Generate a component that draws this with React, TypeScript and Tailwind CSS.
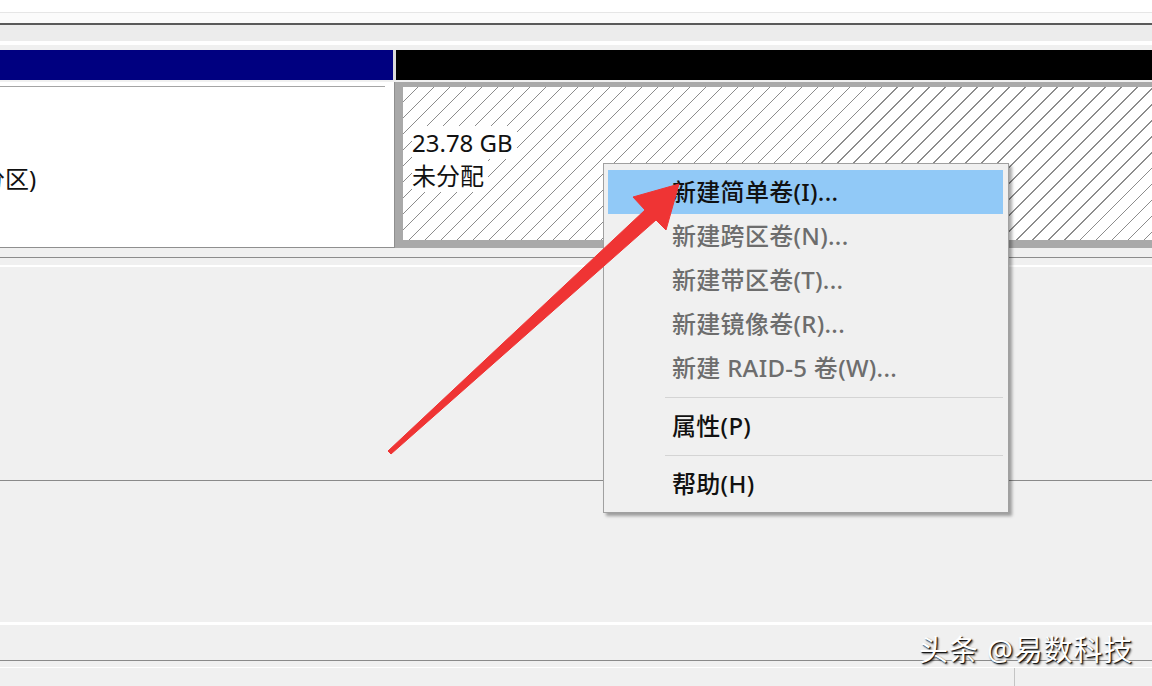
import React from "react";

type MenuItem = { label: string; disabled?: boolean; active?: boolean } | { separator: true };

const items: MenuItem[] = [
  { label: "新建简单卷(I)...", active: true },
  { label: "新建跨区卷(N)...", disabled: true },
  { label: "新建带区卷(T)...", disabled: true },
  { label: "新建镜像卷(R)...", disabled: true },
  { label: "新建 RAID-5 卷(W)...", disabled: true },
  { separator: true },
  { label: "属性(P)" },
  { separator: true },
  { label: "帮助(H)" },
];

function ContextMenu() {
  return (
    <div className="absolute left-[603px] top-[163px] w-[406px] border border-[#a0a0a0] bg-[#f0f0f0] py-[6px] shadow-[3px_3px_3px_rgba(0,0,0,0.35)]">
      {items.map((item, i) =>
        "separator" in item ? (
          <div key={i} className="flex h-[14px] items-center ml-[61px] mr-[5px]">
            <div className="h-px w-full bg-[#d4d4d4]" />
          </div>
        ) : (
          <div
            key={i}
            className={
              "ml-[4px] mr-[5px] flex h-[44px] items-center pl-[64px] text-[24px] font-medium tracking-[0.3px] " +
              (item.active ? "bg-[#91c9f7] text-[#111]" : item.disabled ? "text-[#6d6d6d]" : "text-[#111]")
            }
          >
            {item.label}
          </div>
        )
      )}
    </div>
  );
}

function Arrow() {
  return (
    <svg className="pointer-events-none absolute left-0 top-0" width="1152" height="686" viewBox="0 0 1152 686">
      <polygon
        points="679,184 633,197 645,210 388,451 391,454 656,220 666,230"
        fill="#ef3434"
        stroke="#ef3434"
        strokeWidth="1"
        strokeLinejoin="round"
      />
    </svg>
  );
}

export default function App() {
  return (
    <div className="relative h-[686px] w-[1152px] overflow-hidden bg-[#f0f0f0] font-['Noto_Sans','Noto_Sans_CJK_SC',sans-serif] text-[#111]">
      {/* top toolbar edges */}
      <div className="h-[12px] bg-white" />
      <div className="h-px bg-[#e6e6e6]" />
      <div className="h-[10px] bg-[#fbfbfb]" />
      <div className="h-[2px] bg-[#5a5a5a]" />
      <div className="h-[16px] bg-[#ececec]" />
      <div className="h-[4px] bg-white" />
      <div className="h-[5px] bg-[#f0f0f0]" />

      {/* volume header bars */}
      <div className="flex h-[30px]">
        <div className="w-[393px] bg-[#000080]" />
        <div className="w-[3px] bg-[#dadada]" />
        <div className="flex-1 bg-black" />
      </div>

      {/* volume boxes */}
      <div className="flex h-[168px] pt-[2px]">
        <div className="flex w-[395px] flex-col border-b border-r border-[#8f8f8f] bg-white">
          <div className="mt-[4px] h-px w-[385px] bg-[#a5a5a5]" />
          <div className="-ml-[19px] mt-[75px] whitespace-nowrap text-[24px] leading-[33px]">分区)</div>
        </div>
        <div className="flex flex-1 bg-[#a9a9a9] pb-[8px] pl-[8px] pt-[5px]">
          <div className="flex flex-1 flex-col items-start bg-[repeating-linear-gradient(135deg,#fff_0px,#fff_10.3px,#8c8c8c_10.3px,#8c8c8c_11.3px)] pl-[9px] pt-[39px] text-[24px] leading-[33px]">
            <span className="bg-white pr-[4px]">23.78 GB</span>
            <span className="bg-white pr-[4px]">未分配</span>
          </div>
        </div>
      </div>

      {/* lower pane */}
      <div className="h-[9px]" />
      <div className="h-px bg-[#8c8c8c]" />
      <div className="h-[7px]" />
      <div className="h-[2px] bg-white" />
      <div className="h-[213px]" />
      <div className="h-px bg-[#8a8a8a]" />
      <div className="h-[141px]" />
      <div className="h-[3px] bg-white" />
      <div className="h-[35px]" />
      <div className="h-px bg-[#8a8a8a]" />
      <div className="h-[6px]" />
      <div className="h-px bg-white" />
      <div className="flex h-[20px]">
        <div className="w-[1015px] border-r border-[#c4c4c4]" />
      </div>

      <ContextMenu />
      <Arrow />

      <div className="absolute left-[919px] top-[630px] whitespace-nowrap text-[29px] leading-[40px] tracking-[0.8px] text-white [text-shadow:1px_1px_1px_rgba(0,0,0,0.95),2px_2px_2px_rgba(0,0,0,0.5)]">
        头条 @易数科技
      </div>
    </div>
  );
}
